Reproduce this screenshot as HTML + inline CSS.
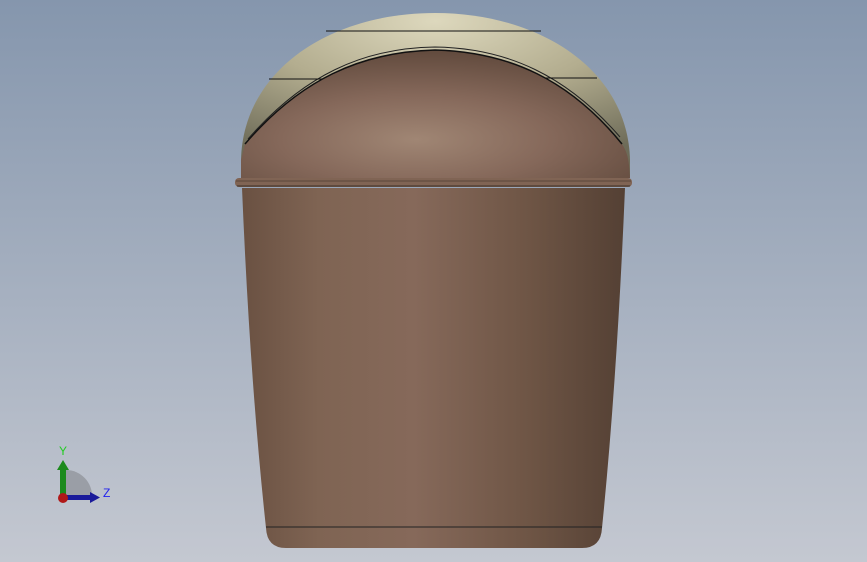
<!DOCTYPE html>
<html><head><style>html,body{margin:0;padding:0;width:867px;height:562px;overflow:hidden}</style></head><body>
<svg width="867" height="562" viewBox="0 0 867 562" xmlns="http://www.w3.org/2000/svg">
<defs>
<linearGradient id="bg" x1="0" y1="0" x2="0" y2="1"><stop offset="0" stop-color="#8596ad"/><stop offset="1" stop-color="#c4c8d1"/></linearGradient>
<linearGradient id="body" x1="0" y1="0" x2="1" y2="0"><stop offset="0" stop-color="#6a5142"/><stop offset="0.2" stop-color="#7f6453"/><stop offset="0.45" stop-color="#86695a"/><stop offset="0.75" stop-color="#6e5545"/><stop offset="1" stop-color="#544034"/></linearGradient>
<radialGradient id="lid" cx="0.5" cy="0.05" r="0.9"><stop offset="0" stop-color="#ddd8bd"/><stop offset="0.5" stop-color="#b3ad8f"/><stop offset="1" stop-color="#6d6b58"/></radialGradient>
<radialGradient id="dome" cx="0.45" cy="0.7" r="0.7"><stop offset="0" stop-color="#a08674"/><stop offset="0.5" stop-color="#85685a"/><stop offset="1" stop-color="#614a3d"/></radialGradient>
</defs>
<rect width="867" height="562" fill="url(#bg)"/>
<path d="M241 178 L241 160 C243 70 330 13 435 13 C540 13 628 70 630 160 L630 178 Z" fill="url(#lid)"/>
<path d="M241 178 L241 160 C243 152 244 148 245 144 C300 80 360 52 435 50 C510 52 570 80 622 144 C627 152 629 158 630 178 Z" fill="url(#dome)"/>
<path d="M245 144 C300 80 360 52 435 50 C510 52 570 80 622 144" fill="none" stroke="#111" stroke-width="1.5"/>
<path d="M248 139 C303 76 362 48 435 47 C508 48 567 76 620 137" fill="none" stroke="#222" stroke-width="1"/>
<line x1="326" y1="31" x2="541" y2="31" stroke="#111" stroke-width="1"/>
<line x1="269" y1="79" x2="322" y2="79" stroke="#111" stroke-width="1"/>
<line x1="545" y1="78" x2="597" y2="78" stroke="#111" stroke-width="1"/>
<path d="M242 188 L625 188 Q617 380 602 528 Q601 548 582 548 L286 548 Q267 548 266 528 Q250 380 242 188 Z" fill="url(#body)"/>
<line x1="266" y1="527" x2="602" y2="527" stroke="#222" stroke-width="1"/>
<rect x="235" y="178" width="397" height="9" rx="4" fill="#806454"/>
<line x1="236" y1="181" x2="631" y2="181" stroke="#5a463a" stroke-width="1"/>
<line x1="237" y1="186" x2="630" y2="186" stroke="#3d2f27" stroke-width="1"/>
<path d="M66 497 L66 470 A26 26 0 0 1 92 497 Z" fill="#9a9ea6"/>
<rect x="60" y="468" width="6" height="30" fill="#1c8a1c"/>
<path d="M57 470 L63 460 L69 470 Z" fill="#1c8a1c"/>
<rect x="63" y="495" width="28" height="5" fill="#1a1a9a"/>
<path d="M90 492 L100 497.5 L90 503 Z" fill="#1a1a9a"/>
<circle cx="63" cy="498" r="5" fill="#b01818"/>
<text x="59" y="455" font-family="Liberation Sans, sans-serif" font-size="12" fill="#22cc22">Y</text>
<text x="103" y="497" font-family="Liberation Sans, sans-serif" font-size="12" fill="#2222ee">Z</text>
</svg>
</body></html>
